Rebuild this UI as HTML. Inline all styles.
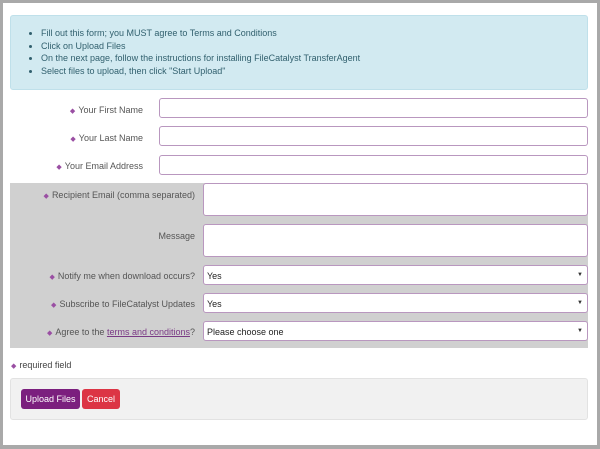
<!DOCTYPE html>
<html><head><style>
body{margin:0;background:#a9a9a9;font-family:"Liberation Sans",sans-serif;font-size:9px;color:#444;}
.page{position:absolute;left:3px;top:3px;width:594px;height:442px;background:#fff;}
.abs{position:absolute;}
.info{left:7px;top:12px;width:578px;height:75px;background:#d2eaf1;border:1px solid #bfe0ea;border-radius:3px;box-sizing:border-box;color:#31606e;}
.info ul{margin:0;padding:11px 0 0 30px;line-height:12.5px;}
.lbl{text-align:right;color:#555;}
.d{color:#9a4fa3;font-size:7px;margin-right:3px;}
.inp{background:#fff;border:1px solid #b997bf;border-radius:3px;box-sizing:border-box;}
.sel{padding:5px 0 0 3px;color:#222;}
.arr{position:absolute;right:4px;top:6px;font-size:6px;color:#333;}
.gray{left:7px;top:180px;width:578px;height:165px;background:#d0d0d0;}
.bar{left:7px;top:375px;width:578px;height:42px;background:#f1f1f1;border:1px solid #e2e2e2;border-radius:3px;box-sizing:border-box;}
.btn{color:#fff;border-radius:3px;top:386px;height:20px;line-height:20px;text-align:center;}
</style></head><body>
<div class="page">
<div class="abs info"><ul>
<li>Fill out this form; you MUST agree to Terms and Conditions</li>
<li>Click on Upload Files</li>
<li>On the next page, follow the instructions for installing FileCatalyst TransferAgent</li>
<li>Select files to upload, then click "Start Upload"</li></ul></div>

<div class="abs lbl" style="left:0;width:140px;top:102px"><span class="d">◆</span>Your First Name</div>
<div class="abs inp" style="left:156px;top:95px;width:429px;height:20px"></div>
<div class="abs lbl" style="left:0;width:140px;top:130px"><span class="d">◆</span>Your Last Name</div>
<div class="abs inp" style="left:156px;top:123px;width:429px;height:20px"></div>
<div class="abs lbl" style="left:0;width:140px;top:158px"><span class="d">◆</span>Your Email Address</div>
<div class="abs inp" style="left:156px;top:152px;width:429px;height:20px"></div>

<div class="abs gray"></div>
<div class="abs lbl" style="left:0;width:192px;top:187px"><span class="d">◆</span>Recipient Email (comma separated)</div>
<div class="abs inp" style="left:200px;top:180px;width:385px;height:33px"></div>
<div class="abs lbl" style="left:0;width:192px;top:228px">Message</div>
<div class="abs inp" style="left:200px;top:221px;width:385px;height:33px"></div>
<div class="abs lbl" style="left:0;width:192px;top:268px"><span class="d">◆</span>Notify me when download occurs?</div>
<div class="abs inp sel" style="left:200px;top:262px;width:385px;height:20px">Yes<span class="arr">▼</span></div>
<div class="abs lbl" style="left:0;width:192px;top:296px"><span class="d">◆</span>Subscribe to FileCatalyst Updates</div>
<div class="abs inp sel" style="left:200px;top:290px;width:385px;height:20px">Yes<span class="arr">▼</span></div>
<div class="abs lbl" style="left:0;width:192px;top:324px"><span class="d">◆</span>Agree to the <span style="color:#7a3a85;text-decoration:underline">terms and conditions</span>?</div>
<div class="abs inp sel" style="left:200px;top:318px;width:385px;height:20px">Please choose one<span class="arr">▼</span></div>

<div class="abs" style="left:8px;top:357px"><span class="d">◆</span>required field</div>
<div class="abs bar"></div>
<div class="abs btn" style="left:18px;width:59px;background:#7b1f7e">Upload Files</div>
<div class="abs btn" style="left:79px;width:38px;background:#dc3545">Cancel</div>
</div>
</body></html>
